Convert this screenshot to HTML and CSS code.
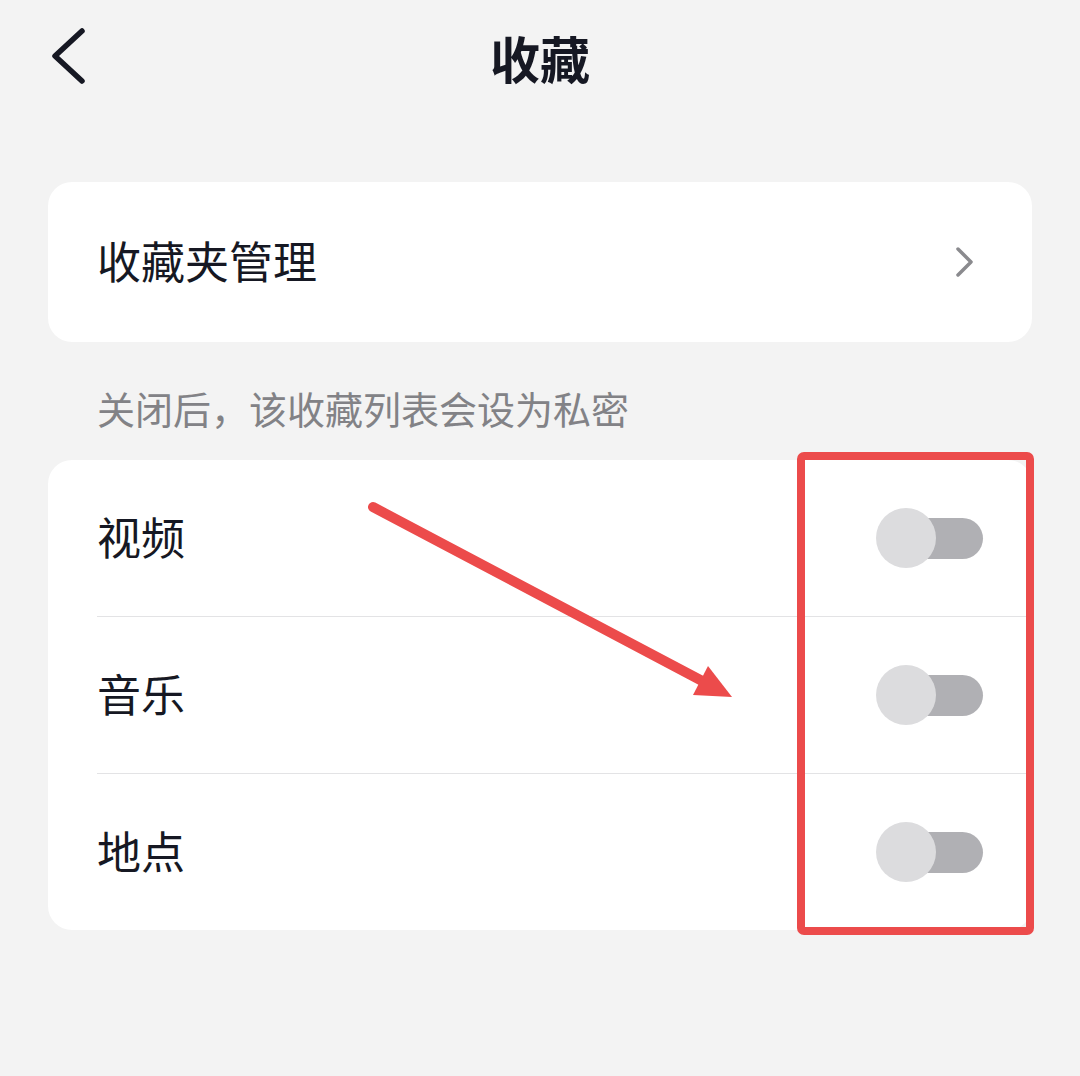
FILE: index.html
```html
<!DOCTYPE html>
<html lang="zh-CN">
<head>
    <meta charset="UTF-8">
    <meta name="viewport" content="width=device-width, initial-scale=1.0">
    <title>收藏</title>
    <link rel="stylesheet" href="styles.css">
</head>
<body>

    <div class="topbar">
        <div class="back">
            <svg width="40" height="60" viewBox="0 0 40 60">
                <polyline points="34,4 7,29 34,54" fill="none" stroke="#161823" stroke-width="5.5" stroke-linecap="round" stroke-linejoin="round"/>
            </svg>
        </div>
        <div class="title">收藏</div>
        <div></div>
    </div>

    <div class="card manage">
        <div class="row first">
            <span class="label">收藏夹管理</span>
            <svg class="more" width="20" height="32" viewBox="0 0 20 32">
                <polyline points="3,3 16,16 3,29" fill="none" stroke="#8a8a8e" stroke-width="3.5" stroke-linecap="round" stroke-linejoin="round"/>
            </svg>
        </div>
    </div>

    <div class="hint">关闭后，该收藏列表会设为私密</div>

    <div class="card">
        <div class="row first">
            <span class="label">视频</span>
            <span class="switch"></span>
        </div>
        <div class="row">
            <span class="label">音乐</span>
            <span class="switch"></span>
        </div>
        <div class="row">
            <span class="label">地点</span>
            <span class="switch"></span>
        </div>
    </div>

    <!-- red marks drawn on top -->
    <svg class="marks" width="1080" height="1076" viewBox="0 0 1080 1076">
        <rect x="801" y="456" width="229" height="475" rx="3" fill="none" stroke="#ec4b4b" stroke-width="8"/>
        <line x1="373" y1="507" x2="706" y2="683" stroke="#ec4b4b" stroke-width="10" stroke-linecap="round"/>
        <polygon points="732,697 708,666 693,695" fill="#ec4b4b"/>
    </svg>

</body>
</html>
```

FILE: styles.css
```css
* {
    box-sizing: border-box;
}

html {
    height: 100%;
    background-color: #f3f3f3;
}

body {
    position: relative;
    margin: 0;
    min-height: 100%;
    overflow: hidden;
    font-family: "Noto Sans CJK SC", "Noto Sans", sans-serif;
    color: #161823;
}

.topbar {
    display: grid;
    grid-template-columns: 1fr auto 1fr;
    align-items: center;
    height: 114px;
    padding: 0 48px;
}

.back {
    display: flex;
    align-items: center;
}

.title {
    font-size: 50px;
    line-height: 60px;
    font-weight: 600;
}

.card {
    margin: 0 48px;
    background-color: #fff;
    border-radius: 24px;
}

.card.manage {
    margin-top: 68px;
}

.row {
    display: flex;
    align-items: center;
    justify-content: space-between;
    height: 157px;
    margin-left: 49px;
    padding-right: 49px;
    border-top: 1px solid #e3e3e5;
}

.row.first {
    height: 156px;
    border-top: none;
}

.manage .row {
    height: 160px;
    padding-right: 57px;
}

.label {
    font-size: 44px;
    line-height: 60px;
    padding-bottom: 4px;
}

.more {
    display: block;
}

.hint {
    margin: 41px 48px 27px;
    padding-left: 49px;
    font-size: 38px;
    line-height: 50px;
    color: #828286;
}

.switch {
    position: relative;
    width: 107px;
    height: 60px;
}

.switch::before {
    content: "";
    position: absolute;
    right: 0;
    top: 10px;
    width: 96px;
    height: 41px;
    border-radius: 21px;
    background-color: #b0b0b4;
}

.switch::after {
    content: "";
    position: absolute;
    left: 0;
    top: 0;
    width: 60px;
    height: 60px;
    border-radius: 50%;
    background-color: #dcdcde;
}

.marks {
    position: absolute;
    left: 0;
    top: 0;
    pointer-events: none;
}
```
